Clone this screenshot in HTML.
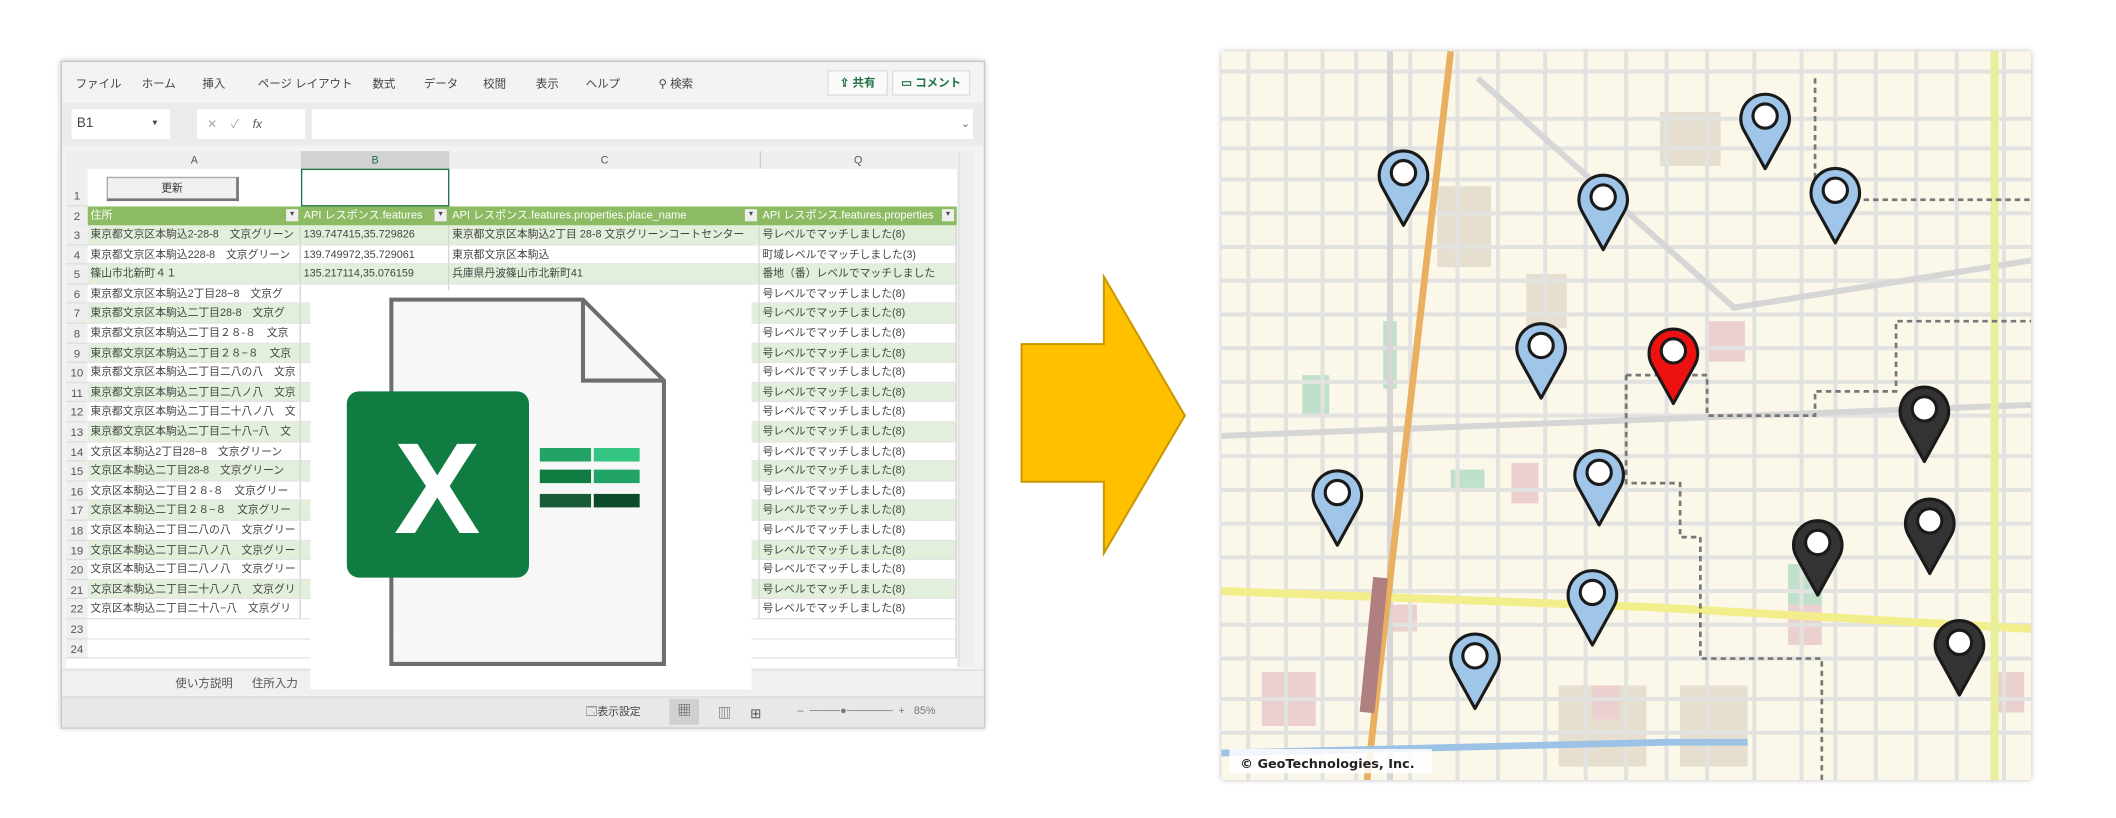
<!DOCTYPE html>
<html><head><meta charset="utf-8"><style>
html,body{margin:0;padding:0;background:#fff;width:2116px;height:817px;overflow:hidden}
#w{position:absolute;left:0;top:0;width:1568px;height:606px;transform:scale(1.34949);transform-origin:0 0;font-family:"Liberation Sans","Noto Sans CJK JP",sans-serif}
.a{position:absolute}
.xl{left:45px;top:45px;width:683px;height:493px;background:#f3f3f3;border:1px solid #c8c8c8;box-shadow:0 0 4px rgba(0,0,0,.25);overflow:hidden}
.menu{font-size:8.5px;color:#444;top:10px}
.cell{position:absolute;height:14.6px;line-height:14.6px;font-size:8px;color:#444;overflow:hidden;white-space:nowrap;border-right:1px solid #d4d4d4;border-bottom:1px solid #e4e4e4;box-sizing:border-box;padding-left:2px}
.rn{position:absolute;left:3px;width:16px;height:14.6px;line-height:14.6px;font-size:8.5px;color:#555;text-align:center;background:#efefef;border-bottom:1px solid #ddd;box-sizing:border-box}
</style></head><body><div id="w">

<div class="a xl">
 <div class="a menu" style="left:10px">ファイル</div>
 <div class="a menu" style="left:59px">ホーム</div>
 <div class="a menu" style="left:104px">挿入</div>
 <div class="a menu" style="left:145px">ページ レイアウト</div>
 <div class="a menu" style="left:230px">数式</div>
 <div class="a menu" style="left:268px">データ</div>
 <div class="a menu" style="left:312px">校閲</div>
 <div class="a menu" style="left:351px">表示</div>
 <div class="a menu" style="left:388px">ヘルプ</div>
 <div class="a menu" style="left:442px">⚲ 検索</div>
 <div class="a" style="left:567px;top:6px;width:43px;height:17px;background:#fafafa;border:1px solid #ddd;font-size:8.5px;line-height:17px;text-align:center;color:#217346;font-weight:bold">⇪ 共有</div>
 <div class="a" style="left:615px;top:6px;width:56px;height:17px;background:#fafafa;border:1px solid #ddd;font-size:8.5px;line-height:17px;text-align:center;color:#217346;font-weight:bold">▭ コメント</div>
 <div class="a" style="left:0;top:30px;width:683px;height:32px;background:#ebebeb"></div>
 <div class="a" style="left:7px;top:35px;width:73px;height:22px;background:#fff;font-size:10px;line-height:22px;color:#444;padding-left:4px;box-sizing:border-box">B1<span style="position:absolute;left:60px;font-size:7px">▾</span></div>
 <div class="a" style="left:100px;top:35px;width:80px;height:22px;background:#fff;font-size:9px;line-height:22px;color:#aaa">&nbsp;&nbsp;&nbsp;✕&nbsp;&nbsp;&nbsp;&nbsp;✓&nbsp;&nbsp;&nbsp;&nbsp;<i style="color:#555">fx</i></div>
 <div class="a" style="left:185px;top:35px;width:490px;height:22px;background:#fff;font-size:8px;line-height:22px;text-align:right;color:#666">⌄&nbsp;</div>
 <div class="a" style="left:3px;top:66px;width:660px;height:13px;background:#efefef;border-bottom:1px solid #ccc"></div>
 <div class="a" style="left:19px;top:66px;width:158px;height:13px;font-size:8px;text-align:center;line-height:13px;color:#555;border-right:1px solid #ccc">A</div>
 <div class="a" style="left:177px;top:66px;width:110px;height:13px;font-size:8px;text-align:center;line-height:13px;color:#217346;background:#d2d2d2;border-bottom:2px solid #217346">B</div>
 <div class="a" style="left:287px;top:66px;width:230px;height:13px;font-size:8px;text-align:center;line-height:13px;color:#555;border-right:1px solid #ccc">C</div>
 <div class="a" style="left:517px;top:66px;width:146px;height:13px;font-size:8px;text-align:center;line-height:13px;color:#555">Q</div>
 <div class="a" style="left:664px;top:66px;width:11px;height:382px;background:#efefef;border-left:1px solid #ddd"></div>
 <div class="a" style="left:3px;top:79px;width:660px;height:370px;background:#fff"></div>
 <div class="rn" style="top:79px;height:28px;line-height:40px">1</div>
 <div class="a" style="left:33px;top:85px;width:95px;height:15px;background:#f0f0f0;border:1px solid #aaa;border-right:2px solid #777;border-bottom:2px solid #777;font-size:8px;text-align:center;line-height:15px;color:#333">更新</div>
 <div class="a" style="left:177px;top:79px;width:108px;height:26px;border:1.5px solid #217346"></div>
 <div class="rn" style="top:107px">2</div>
 <div class="a" style="left:19px;top:107px;width:644px;height:14px;background:#8dbb63"></div>
 <div class="a" style="left:21px;top:107px;font-size:8.2px;line-height:14px;color:#fff">住所</div>
 <div class="a" style="left:179px;top:107px;width:96px;overflow:hidden;white-space:nowrap;font-size:8.2px;line-height:14px;color:#fff">API レスポンス.features</div>
 <div class="a" style="left:289px;top:107px;width:220px;overflow:hidden;white-space:nowrap;font-size:8.2px;line-height:14px;color:#fff">API レスポンス.features.properties.place_name</div>
 <div class="a" style="left:519px;top:107px;width:135px;overflow:hidden;white-space:nowrap;font-size:8.2px;line-height:14px;color:#fff">API レスポンス.features.properties</div>
 <div class="a" style="left:166px;top:109px;width:9px;height:9px;background:#eee;font-size:6px;text-align:center;line-height:9px;color:#444">▾</div>
 <div class="a" style="left:276px;top:109px;width:9px;height:9px;background:#eee;font-size:6px;text-align:center;line-height:9px;color:#444">▾</div>
 <div class="a" style="left:506px;top:109px;width:9px;height:9px;background:#eee;font-size:6px;text-align:center;line-height:9px;color:#444">▾</div>
 <div class="a" style="left:652px;top:109px;width:9px;height:9px;background:#eee;font-size:6px;text-align:center;line-height:9px;color:#444">▾</div>
 <div id="rows"></div>
 <div class="a" style="left:0;top:450px;width:683px;height:18px;background:#f0f0f0;border-top:1px solid #ddd"></div>
 <div class="a" style="left:84px;top:454px;font-size:8.5px;color:#555">使い方説明&nbsp;&nbsp;&nbsp;&nbsp;&nbsp;&nbsp;住所入力</div>
 <div class="a" style="left:0;top:470px;width:683px;height:23px;background:#e8e8e8;border-top:1px solid #d8d8d8"></div>
 <div class="a" style="left:388px;top:476px;font-size:8px;color:#444">🗔表示設定</div>
 <div class="a" style="left:450px;top:472px;width:22px;height:19px;background:#d0d0d0;font-size:10px;text-align:center;line-height:19px;color:#555">▦</div>
 <div class="a" style="left:486px;top:474px;font-size:10px;color:#555">▥&nbsp;&nbsp;&nbsp;&nbsp;&nbsp;⊞</div>
 <div class="a" style="left:545px;top:476px;font-size:8px;color:#777">–&nbsp;&nbsp;────●──────&nbsp;&nbsp;+&nbsp;&nbsp;&nbsp;85%</div>
</div>

<svg class="a" style="left:230px;top:215px" width="327" height="296" viewBox="0 0 327 296">
 <rect width="327" height="296" fill="#fff"/>
 <path d="M60,7 H202 L262,67 V277 H60 Z" fill="#f7f7f7" stroke="#6e6e6e" stroke-width="3"/>
 <path d="M202,7 V67 H262" fill="none" stroke="#6e6e6e" stroke-width="3"/>
 <rect x="27" y="75" width="135" height="138" rx="9" fill="#107c41"/>
 <text x="94" y="180" font-family="Liberation Sans,sans-serif" font-weight="bold" font-size="96" fill="#fff" text-anchor="middle">X</text>
 <rect x="170" y="117" width="38" height="10" fill="#21a366"/>
 <rect x="210" y="117" width="34" height="10" fill="#33c481"/>
 <rect x="170" y="133" width="38" height="10" fill="#107c41"/>
 <rect x="210" y="133" width="34" height="10" fill="#21a366"/>
 <rect x="170" y="151" width="38" height="10" fill="#185c37"/>
 <rect x="210" y="151" width="34" height="10" fill="#0b4a2a"/>
</svg>

<svg class="a" style="left:755px;top:203px" width="126" height="210"><polygon points="2,52 63,52 63,2 123,105 63,207 63,154 2,154" fill="#ffc000" stroke="#c99700" stroke-width="1.5"/></svg>

<svg class="a" style="left:905px;top:38px;box-shadow:0 0 4px rgba(0,0,0,.3)" width="600" height="540" viewBox="0 0 600 540">
 <rect width="600" height="540" fill="#fbf8ea"/>
 <g fill="#e6dfcf"><rect x="160" y="100" width="40" height="60"/><rect x="226" y="165" width="30" height="40"/><rect x="325" y="45" width="45" height="40"/><rect x="250" y="470" width="65" height="60"/><rect x="340" y="470" width="50" height="60"/></g>
 <g fill="#ecd0d0"><rect x="360" y="200" width="28" height="30"/><rect x="215" y="305" width="20" height="30"/><rect x="30" y="460" width="40" height="40"/><rect x="120" y="410" width="25" height="20"/><rect x="420" y="410" width="25" height="30"/><rect x="570" y="460" width="25" height="30"/><rect x="275" y="470" width="20" height="25"/></g>
 <g fill="#bfe0cb"><rect x="60" y="240" width="20" height="30"/><rect x="120" y="200" width="10" height="50"/><rect x="420" y="380" width="25" height="30"/><rect x="170" y="310" width="25" height="15"/></g>
 <g stroke="#e2e2e0" stroke-width="3" fill="none">
  <path d="M0,15H600M0,50H600M0,72H600M0,95H600M0,120H600M0,145H600M0,170H600M0,195H600M0,220H600M0,245H600M0,270H600M0,300H600M0,325H600M0,350H600M0,375H600M0,400H600M0,425H600M0,450H600M0,480H600M0,505H600"/>
  <path d="M20,0V540M48,0V540M75,0V540M100,0V540M140,0V540M175,0V540M205,0V540M240,0V540M270,0V540M300,0V540M330,0V540M360,0V540M395,0V540M430,0V540M455,0V540M485,0V540M515,0V540M545,0V540M580,0V540"/>
 </g>
 <g stroke="#d6d6d6" stroke-width="4.5" fill="none"><path d="M0,285 L600,262"/><path d="M190,20 L380,190 L600,155"/><path d="M125,0V540"/></g>
 <path d="M0,400 L320,412 L600,428" stroke="#f3ee8c" stroke-width="6" fill="none"/>
 <path d="M573,0 V540" stroke="#e8ef9c" stroke-width="6"/>
 <path d="M170,0 L108,540" stroke="#e8b060" stroke-width="5"/>
 <path d="M118,390 L108,490" stroke="#b07f7f" stroke-width="11"/>
 <g stroke="#777" stroke-width="2" stroke-dasharray="4,3" fill="none"><path d="M300,240 V320 H340 V360 H355 V450 H445 V540"/><path d="M300,240 H360 V270 H440 V252 H500 V200 H600"/><path d="M440,20 V110 H600"/></g>
 <path d="M0,520 L330,512 H390" stroke="#9cc3e5" stroke-width="5" fill="none"/>
 <rect x="6" y="517" width="150" height="18" fill="#fff" opacity=".85"/>
 <text x="14" y="531" font-family="DejaVu Sans,sans-serif" font-size="9.5" font-weight="bold" fill="#222">© GeoTechnologies, Inc.</text>
 <defs><path id="pin" d="M0,37 L-15.5,9 A18,18 0 1 1 15.5,9 Z" stroke="#1a1a1a" stroke-width="2.3" stroke-linejoin="round"/></defs>
 <g fill="#9fc5e8">
  <use href="#pin" x="135" y="92"/><use href="#pin" x="403" y="50"/><use href="#pin" x="283" y="110"/><use href="#pin" x="455" y="105"/><use href="#pin" x="237" y="220"/><use href="#pin" x="280" y="314"/><use href="#pin" x="86" y="329"/><use href="#pin" x="275" y="403"/><use href="#pin" x="188" y="450"/>
 </g>
 <use href="#pin" x="335" y="224" fill="#ee1111"/>
 <g fill="#333"><use href="#pin" x="521" y="267"/><use href="#pin" x="525" y="350"/><use href="#pin" x="442" y="366"/><use href="#pin" x="547" y="440"/></g>
 <g fill="#fff" stroke="#1a1a1a" stroke-width="2.3">
  <circle cx="135" cy="90" r="9"/><circle cx="403" cy="48" r="9"/><circle cx="283" cy="108" r="9"/><circle cx="455" cy="103" r="9"/><circle cx="237" cy="218" r="9"/><circle cx="280" cy="312" r="9"/><circle cx="86" cy="327" r="9"/><circle cx="275" cy="401" r="9"/><circle cx="188" cy="448" r="9"/><circle cx="335" cy="222" r="9"/><circle cx="521" cy="265" r="9"/><circle cx="525" cy="348" r="9"/><circle cx="442" cy="364" r="9"/><circle cx="547" cy="438" r="9"/>
 </g>
</svg>
</div>
<script>
var A=["東京都文京区本駒込2-28-8　文京グリーン","東京都文京区本駒込228-8　文京グリーン","篠山市北新町４１","東京都文京区本駒込2丁目28−8　文京グ","東京都文京区本駒込二丁目28-8　文京グ","東京都文京区本駒込二丁目２８-８　文京","東京都文京区本駒込二丁目２８−８　文京","東京都文京区本駒込二丁目二八の八　文京","東京都文京区本駒込二丁目二八ノ八　文京","東京都文京区本駒込二丁目二十八ノ八　文","東京都文京区本駒込二丁目二十八−八　文","文京区本駒込2丁目28−8　文京グリーン","文京区本駒込二丁目28-8　文京グリーン","文京区本駒込二丁目２８-８　文京グリー","文京区本駒込二丁目２８−８　文京グリー","文京区本駒込二丁目二八の八　文京グリー","文京区本駒込二丁目二八ノ八　文京グリー","文京区本駒込二丁目二八ノ八　文京グリー","文京区本駒込二丁目二十八ノ八　文京グリ","文京区本駒込二丁目二十八−八　文京グリ"];
var B=["139.747415,35.729826","139.749972,35.729061","135.217114,35.076159"];
var C=["東京都文京区本駒込2丁目 28-8 文京グリーンコートセンター","東京都文京区本駒込","兵庫県丹波篠山市北新町41"];
var h="";
for(var i=0;i<22;i++){var y=121+i*14.6,n=i+3,bg=(i<20&&i%2==0)?"#e2efda":"#fff";
h+='<div class="rn" style="top:'+y+'px">'+n+'</div>';
if(i<20){h+='<div class="cell" style="left:19px;top:'+y+'px;width:158px;background:'+bg+'">'+A[i]+'</div>';
h+='<div class="cell" style="left:177px;top:'+y+'px;width:110px;background:'+bg+'">'+(B[i]||"")+'</div>';
h+='<div class="cell" style="left:287px;top:'+y+'px;width:230px;background:'+bg+'">'+(C[i]||"")+'</div>';
h+='<div class="cell" style="left:517px;top:'+y+'px;width:146px;background:'+bg+'">'+(i==1?"町域レベルでマッチしました(3)":i==2?"番地（番）レベルでマッチしました":"号レベルでマッチしました(8)")+'</div>';}
else{h+='<div class="cell" style="left:19px;top:'+y+'px;width:644px;background:#fff"></div>';}}
document.getElementById("rows").innerHTML=h;
</script>
</body></html>
